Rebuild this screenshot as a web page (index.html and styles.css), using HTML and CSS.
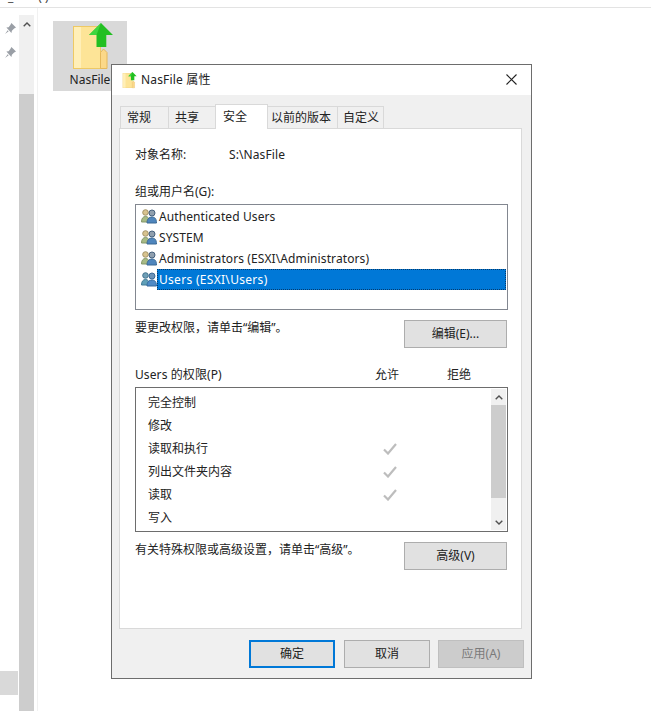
FILE: index.html
```html
<!DOCTYPE html>
<html lang="zh-CN">
<head>
<meta charset="utf-8">
<title>NasFile 属性</title>
<link rel="stylesheet" href="styles.css">
</head>
<body>
<svg class="defs" width="0" height="0" aria-hidden="true">
  <defs>
    <symbol id="folder" viewBox="0 0 36 46" overflow="visible">
      <rect x="0.5" y="3.500" width="27" height="42" fill="#fde497" stroke="#eec964"/>
      <rect x="1" y="4" width="7" height="41" fill="#ffefb8"/>
      <path d="M27.500 45.500V29.500L30.500 26l3.500 3.500v16z" fill="#fbd889" stroke="#e5b85b"/>
      <path d="M28 0L40 12H33.300V24H23.500V12H16z" fill="#22bf22"/>
      <path d="M28 0L16 12H23.500z" fill="#3fd63f"/>
    </symbol>
    <symbol id="user-pair" viewBox="0 0 16 15">
      <circle cx="4.500" cy="3.500" r="2.800" fill="#d8c38f" stroke="#a49468"/>
      <path d="M.5 13c0-3.500 1.500-5.500 4-5.500s4 2 4 5.500z" fill="#a8bb85" stroke="#84976a"/>
      <circle cx="11" cy="4" r="3" fill="#8f9fae" stroke="#46617e"/>
      <path d="M6 14c0-4 2-6 5-6s4.500 2 4.500 6z" fill="#4f86bd" stroke="#3a6894"/>
    </symbol>
    <symbol id="user-blue" viewBox="0 0 16 15">
      <circle cx="4.500" cy="3.500" r="2.800" fill="#6f9fb6" stroke="#44738f"/>
      <path d="M.5 13c0-3.500 1.500-5.500 4-5.500s4 2 4 5.500z" fill="#5f9fb8" stroke="#417a96"/>
      <circle cx="11" cy="4" r="3" fill="#6d93b8" stroke="#3d6a96"/>
      <path d="M6 14c0-4 2-6 5-6s4.500 2 4.500 6z" fill="#4f8ac6" stroke="#35699e"/>
    </symbol>
    <symbol id="check" viewBox="0 0 14 12">
      <path d="M1 6.500l4 4L13 1" fill="none" stroke="#bdbdbd" stroke-width="2.200"/>
    </symbol>
    <symbol id="pin" viewBox="0 0 12 12">
      <path d="M7 0l5 5-2 1-2.500 2.500L7 11 1.500 5 4 4.500 6 2z M3 8l-3 4 4-3z" fill="#9a9fa6"/>
    </symbol>
  </defs>
</svg>

<div class="desktop">
  <header class="explorer-top"><span class="cut-text">_</span><span class="cut-text">( )</span></header>
  <div class="explorer-body">
    <aside class="nav-pane">
      <div class="pins">
        <svg class="pin"><use href="#pin"/></svg>
        <svg class="pin"><use href="#pin"/></svg>
      </div>
      <div class="nav-selected"></div>
    </aside>
    <div class="nav-scroll">
      <svg class="nav-arrow" viewBox="0 0 8 5"><path d="M.7 4.300L4 1l3.300 3.300" fill="none" stroke="#505050" stroke-width="1.400"/></svg>
    </div>
    <main class="files">
      <div class="file-tile">
        <svg class="file-icon"><use href="#folder"/></svg>
        <span class="file-name">NasFile</span>
      </div>
    </main>
  </div>

  <section class="dialog">
    <div class="titlebar">
      <svg class="title-icon"><use href="#folder"/></svg>
      <span class="title-text">NasFile 属性</span>
      <svg class="close" viewBox="0 0 11 11"><path d="M.5.500l10 10M10.500.500l-10 10" stroke="#222" stroke-width="1.100" fill="none"/></svg>
    </div>
    <div class="dialog-body">
      <div class="tabs">
        <span class="tab tab-1">常规</span>
        <span class="tab tab-2">共享</span>
        <span class="tab tab-active">安全</span>
        <span class="tab tab-4">以前的版本</span>
        <span class="tab tab-5">自定义</span>
      </div>
      <div class="panel">
        <div class="object-row"><span class="object-label">对象名称:</span><span class="latin">S:\NasFile</span></div>
        <div class="section-label">组或用户名(G):</div>
        <ul class="user-list">
          <li class="user"><svg class="user-icon"><use href="#user-pair"/></svg><span class="user-name latin">Authenticated Users</span></li>
          <li class="user"><svg class="user-icon"><use href="#user-pair"/></svg><span class="user-name latin">SYSTEM</span></li>
          <li class="user"><svg class="user-icon"><use href="#user-pair"/></svg><span class="user-name latin">Administrators (ESXI\Administrators)</span></li>
          <li class="user"><svg class="user-icon"><use href="#user-blue"/></svg><span class="user-name user-selected">Users (ESXI\Users)</span></li>
        </ul>
        <div class="action-row action-first">
          <span class="action-text">要更改权限，请单击“编辑”。</span>
          <button class="btn btn-side">编辑(E)...</button>
        </div>
        <div class="perm-head">
          <span class="perm-title latin">Users 的权限(P)</span>
          <span class="perm-col">允许</span>
          <span class="perm-col">拒绝</span>
        </div>
        <div class="perm-box">
          <ul class="perm-list">
            <li class="perm"><span class="perm-name">完全控制</span></li>
            <li class="perm"><span class="perm-name">修改</span></li>
            <li class="perm"><span class="perm-name">读取和执行</span><svg class="check"><use href="#check"/></svg></li>
            <li class="perm"><span class="perm-name">列出文件夹内容</span><svg class="check"><use href="#check"/></svg></li>
            <li class="perm"><span class="perm-name">读取</span><svg class="check"><use href="#check"/></svg></li>
            <li class="perm"><span class="perm-name">写入</span></li>
          </ul>
          <div class="perm-scroll">
            <svg class="scroll-arrow" viewBox="0 0 8 5"><path d="M.7 4.300L4 1l3.300 3.300" fill="none" stroke="#505050" stroke-width="1.400"/></svg>
            <div class="scroll-thumb"></div>
            <svg class="scroll-arrow scroll-arrow-down" viewBox="0 0 8 5"><path d="M.7.700L4 4l3.300-3.300" fill="none" stroke="#505050" stroke-width="1.400"/></svg>
          </div>
        </div>
        <div class="action-row action-second">
          <span class="action-text">有关特殊权限或高级设置，请单击“高级”。</span>
          <button class="btn btn-side">高级(V)</button>
        </div>
      </div>
      <div class="footer">
        <button class="btn btn-foot btn-default">确定</button>
        <button class="btn btn-foot">取消</button>
        <button class="btn btn-foot btn-disabled">应用(A)</button>
      </div>
    </div>
  </section>
</div>
</body>
</html>
```
FILE: styles.css
```css
* { box-sizing: border-box; }
html, body { margin: 0; padding: 0; background: #fff; }
body {
  font-family: "Noto Sans", "Noto Sans CJK SC", sans-serif;
  font-size: 12px;
  line-height: 16px;
  color: #222;
}
ul { list-style: none; margin: 0; padding: 0; }
.defs { position: absolute; }
.latin { letter-spacing: 0.1px; }

.desktop {
  position: relative;
  width: 651px;
  height: 711px;
  overflow: hidden;
  display: flex;
  flex-direction: column;
}
.explorer-top {
  height: 8px;
  flex: none;
  border-bottom: 1px solid #e3e3e3;
  overflow: hidden;
  display: flex;
  gap: 25px;
  padding-left: 8px;
}
.cut-text { display: block; margin-top: -11px; color: #444; }
.explorer-body { flex: 1; display: flex; min-height: 0; }

.nav-pane { width: 19px; flex: none; display: flex; flex-direction: column; }
.pins { display: flex; flex-direction: column; gap: 13px; padding: 15px 0 0 5px; height: 663px; }
.pin { width: 11px; height: 11px; display: block; }
.nav-selected { width: 18px; height: 24px; background: #d9d9d9; }

.nav-scroll {
  width: 15px;
  flex: none;
  margin-top: 7px;
  background: linear-gradient(#f0f0f0 0 79px, #cdcdcd 79px);
  display: flex;
  justify-content: center;
  padding-top: 7px;
  align-items: flex-start;
}
.nav-arrow { width: 8px; height: 5px; display: block; }

.files { flex: 1; border-left: 1px solid #f1f1f1; margin-left: 3px; padding: 13px 0 0 15px; }
.file-tile {
  width: 74px;
  height: 70px;
  background: #d9d9d9;
  display: flex;
  flex-direction: column;
  align-items: center;
}
.file-icon { width: 36px; height: 46px; display: block; margin: 2px 0 0 2px; flex: none; overflow: visible; }
.file-name { margin-top: 2px; line-height: 18px; }

.dialog {
  position: absolute;
  left: 111px;
  top: 64px;
  width: 421px;
  height: 615px;
  border: 1px solid #6d6d6d;
  background: #f0f0f0;
  display: flex;
  flex-direction: column;
}
.titlebar {
  height: 30px;
  flex: none;
  background: #fff;
  display: flex;
  align-items: center;
  padding: 0 14px 0 10px;
}
.title-icon { width: 14px; height: 16px; flex: none; overflow: visible; }
.title-text { margin-left: 5px; flex: 1; letter-spacing: 0.17px; }
.close { width: 11px; height: 11px; flex: none; margin-bottom: 2px; }

.dialog-body { flex: 1; padding: 9px 9px 0 7px; display: flex; flex-direction: column; min-height: 0; }
.tabs { display: flex; height: 24px; flex: none; align-items: flex-end; position: relative; z-index: 1; padding-left: 1px; }
.tab {
  height: 22px;
  border: 1px solid #d9d9d9;
  border-bottom: none;
  margin-right: -1px;
  background: #f0f0f0;
  display: flex;
  align-items: center;
  padding-left: 6px;
}
.tab-1 { width: 49px; }
.tab-2 { width: 48px; }
.tab-active {
  width: 53px;
  height: 25px;
  padding: 0 0 0 7px;
  background: #fff;
  position: relative;
  top: 1px;
  z-index: 1;
}
.tab-4 { width: 71px; padding-left: 3px; }
.tab-5 { width: 47px; padding-left: 5px; }

.panel {
  flex: none;
  height: 501px;
  background: #fff;
  border: 1px solid #d9d9d9;
  padding: 18px 14px 0 15px;
}
.object-row { display: flex; height: 16px; }
.object-label { width: 94px; }
.section-label { margin-top: 21px; height: 16px; }

.user-list {
  margin-top: 4px;
  height: 106px;
  width: 373px;
  border: 1px solid #828790;
  padding: 1px;
}
.user { height: 21px; display: flex; align-items: center; padding-left: 4px; }
.user-icon { width: 16px; height: 15px; flex: none; }
.user-name { margin-left: 2px; line-height: 21px; }
.user-selected {
  flex: 1;
  margin-left: 0;
  padding-left: 2px;
  height: 21px;
  background: #0078d7;
  color: #fff;
  letter-spacing: 0.3px;
  outline: 1px dotted #063a6b;
  outline-offset: -1px;
}

.action-row { display: flex; justify-content: space-between; align-items: flex-start; width: 372px; }
.action-first { margin-top: 10px; }
.action-second { margin-top: 10px; }
.action-text { line-height: 14px; padding-top: 1px; }

.btn {
  font: inherit;
  color: #222;
  padding: 0;
  background: #e1e1e1;
  border: 1px solid #adadad;
  border-radius: 0;
  height: 28px;
}
.btn-side { width: 103px; }

.perm-head { display: flex; margin-top: 19px; height: 16px; }
.perm-title { width: 240px; flex: none; }
.perm-col { width: 72px; flex: none; }

.perm-box {
  margin-top: 4px;
  width: 373px;
  height: 145px;
  border: 1px solid #6d6d6d;
  display: flex;
}
.perm-list { flex: 1; padding: 3px 0 0 12px; }
.perm { height: 23px; display: flex; align-items: center; }
.perm-name { width: 235px; flex: none; }
.check { width: 14px; height: 12px; flex: none; }

.perm-scroll {
  width: 15px;
  flex: none;
  margin: 1px 1px 1px 0;
  background: #f0f0f0;
  display: flex;
  flex-direction: column;
  align-items: center;
  padding: 6px 0 5px;
}
.scroll-thumb { width: 15px; height: 93px; background: #cdcdcd; margin-top: 5px; flex: none; }
.scroll-arrow { width: 8px; height: 5px; display: block; flex: none; }
.scroll-arrow-down { margin-top: auto; }

.footer {
  flex: 1;
  display: flex;
  gap: 9px;
  padding: 11px 0 0 130px;
}
.btn-foot { width: 86px; flex: none; }
.btn-foot + .btn-foot + .btn-foot { margin-left: -1px; }
.btn-default { border: 2px solid #0078d7; }
.btn-disabled { background: #cccccc; border-color: #bfbfbf; color: #7a7a7a; }
```
